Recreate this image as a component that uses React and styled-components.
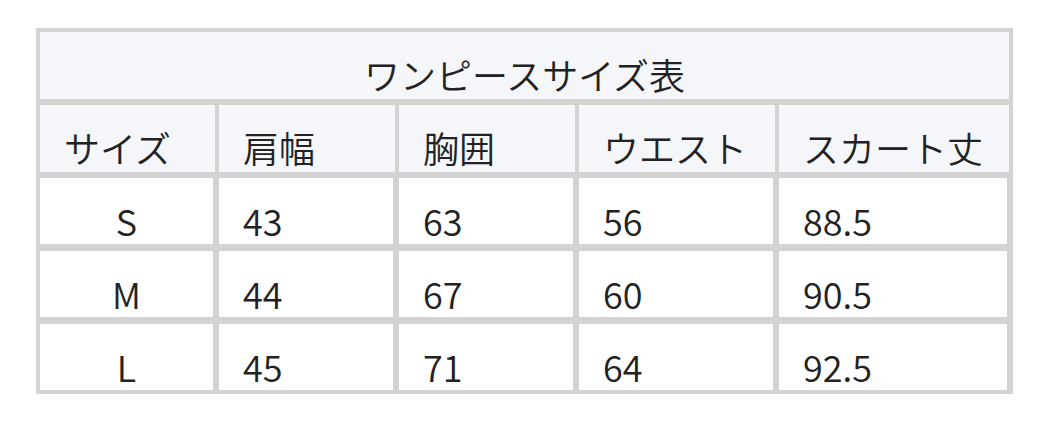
import React from "react";
import styled, { createGlobalStyle } from "styled-components";

const Global = createGlobalStyle`
  html, body { margin: 0; padding: 0; background: #ffffff; }
  body { font-family: "Noto Sans CJK JP", "Noto Sans", sans-serif; color: #222222; }
`;

const Page = styled.div`
  padding: 28px 0 0 36px;
`;

const Table = styled.div`
  display: inline-grid;
  grid-template-columns: 175px 176px 176px 196px 230px;
  grid-auto-rows: 66px;
  column-gap: 4px;
  row-gap: 7px;
  padding: 4px;
  background: #d3d3d3;
`;

const Title = styled.div`
  grid-column: 1 / -1;
  height: 67px;
  background: #f5f6fa;
  display: flex;
  align-items: center;
  justify-content: center;
  padding-top: 17px;
  box-sizing: border-box;
  font-size: 36px;
  font-weight: 350;
  line-height: normal;
`;

const HeadCell = styled.div`
  height: 67px;
  background: #f5f6fa;
  display: flex;
  align-items: center;
  padding: 17px 0 0 24px;
  box-sizing: border-box;
  font-size: 36px;
  font-weight: 350;
  line-height: normal;
  white-space: nowrap;
`;

const Cell = styled.div`
  height: 66px;
  margin-right: 2px;
  background: #ffffff;
  display: flex;
  align-items: center;
  justify-content: ${(p) => (p.$center ? "center" : "flex-start")};
  padding: 17px 0 0 ${(p) => (p.$center ? "0" : "24px")};
  box-sizing: border-box;
  font-size: 36px;
  font-weight: 350;
  line-height: normal;
`;

const headers = ["サイズ", "肩幅", "胸囲", "ウエスト", "スカート丈"];
const rows = [
  ["S", "43", "63", "56", "88.5"],
  ["M", "44", "67", "60", "90.5"],
  ["L", "45", "71", "64", "92.5"],
];

export default function App() {
  return (
    <>
      <Global />
      <Page>
        <Table>
          <Title>ワンピースサイズ表</Title>
          {headers.map((h) => (
            <HeadCell key={h}>{h}</HeadCell>
          ))}
          {rows.map((r) =>
            r.map((v, i) => (
              <Cell key={r[0] + i} $center={i === 0}>
                {v}
              </Cell>
            ))
          )}
        </Table>
      </Page>
    </>
  );
}
